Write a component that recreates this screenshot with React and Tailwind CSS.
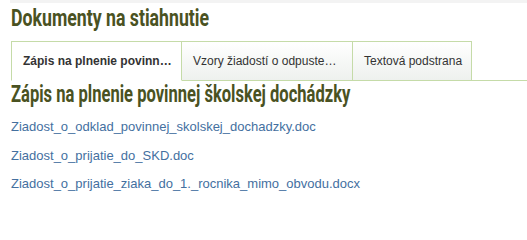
const tabs = [
  { label: 'Zápis na plnenie povinn…', active: true, w: 'w-[171px]' },
  { label: 'Vzory žiadostí o odpuste…', active: false, w: 'w-[171px]' },
  { label: 'Textová podstrana', active: false, w: 'w-[119px]' },
]

const files = [
  'Ziadost_o_odklad_povinnej_skolskej_dochadzky.doc',
  'Ziadost_o_prijatie_do_SKD.doc',
  'Ziadost_o_prijatie_ziaka_do_1._rocnika_mimo_obvodu.docx',
]

// no condensed face is installed, so the heading is narrowed with scale-x
function Heading({ as: Tag = 'h2', className = '', scale, children }) {
  return (
    <Tag className={`h-[26px] text-[23px] leading-[26px] font-bold text-[#4a5222] whitespace-nowrap font-['Roboto',sans-serif] ${className}`}>
      <span className={`inline-block origin-left ${scale}`}>{children}</span>
    </Tag>
  )
}

export default function App() {
  return (
    <div className="w-[527px] h-[217px] bg-white overflow-hidden font-['Liberation_Sans',Arial,sans-serif]">
      <div className="ml-[10px] h-[3px] bg-[#f3f3f3]" />

      <div className="pl-[11px]">
        <Heading as="h1" className="mt-[3px]" scale="scale-x-[0.77]">Dokumenty na stiahnutie</Heading>

        {/* Tabs */}
        <div className="mt-[9px] flex border-b border-[#c5dba8]">
          {tabs.map((t) => (
            <div key={t.label}
              className={`${t.w} shrink-0 h-[40px] -mb-px flex items-center px-[11px] text-[12px] text-[#333] whitespace-nowrap border-t border-r border-[#c5dba8] first:border-l ${t.active ? 'bg-white font-bold border-b border-b-white' : 'bg-gradient-to-b from-white to-[#eef1ee] border-b border-b-[#c5dba8]'}`}>
              {t.label}
            </div>
          ))}
        </div>

        <Heading className="mt-[1px]" scale="scale-x-[0.72]">Zápis na plnenie povinnej školskej dochádzky</Heading>

        <ul className="mt-[10px] flex flex-col gap-[12.5px]">
          {files.map((f) => (
            <li key={f} className="leading-[15px]">
              <a href="#" className="text-[13px] leading-[15px] text-[#44709f]">{f}</a>
            </li>
          ))}
        </ul>
      </div>
    </div>
  )
}
